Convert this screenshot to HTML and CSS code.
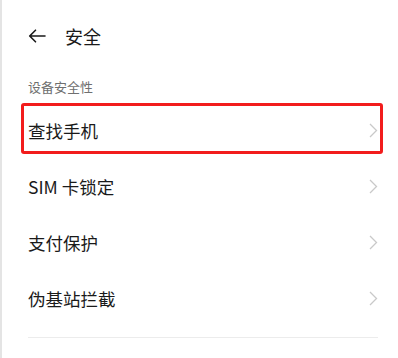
FILE: index.html
```html
<!DOCTYPE html>
<html lang="zh-CN">
<head>
    <meta charset="UTF-8">
    <meta name="viewport" content="width=device-width, initial-scale=1.0">
    <title>安全</title>
    <link rel="stylesheet" href="styles.css">
</head>
<body>
    <div class="page">
        <div class="top-bar">
            <svg class="back" width="18" height="14" viewBox="0 0 18 14">
                <path d="M17 7H2 M7.5 1.2L1.7 7l5.8 5.8" fill="none" stroke="#1a1a1a" stroke-width="1.6" stroke-linecap="round" stroke-linejoin="round"/>
            </svg>
            <h1>安全</h1>
        </div>

        <div class="section-title">设备安全性</div>

        <div class="list">
            <div class="row marked">
                <span>查找手机</span>
                <svg class="chev" width="9" height="15" viewBox="0 0 9 15"><path d="M1 1l6.5 6.5L1 14" fill="none" stroke="#c9c9c9" stroke-width="1.3"/></svg>
            </div>
            <div class="row">
                <span>SIM 卡锁定</span>
                <svg class="chev" width="9" height="15" viewBox="0 0 9 15"><path d="M1 1l6.5 6.5L1 14" fill="none" stroke="#c9c9c9" stroke-width="1.3"/></svg>
            </div>
            <div class="row">
                <span>支付保护</span>
                <svg class="chev" width="9" height="15" viewBox="0 0 9 15"><path d="M1 1l6.5 6.5L1 14" fill="none" stroke="#c9c9c9" stroke-width="1.3"/></svg>
            </div>
            <div class="row">
                <span>伪基站拦截</span>
                <svg class="chev" width="9" height="15" viewBox="0 0 9 15"><path d="M1 1l6.5 6.5L1 14" fill="none" stroke="#c9c9c9" stroke-width="1.3"/></svg>
            </div>
        </div>

        <div class="divider"></div>
    </div>
</body>
</html>
```

FILE: styles.css
```css
body {
    margin: 0;
    background: #ffffff;
    font-family: "Noto Sans CJK SC", "Noto Sans", sans-serif;
    color: #1a1a1a;
}

.page {
    height: 358px;
    box-sizing: border-box;
    border-left: 2px solid #e4e4e4;
    padding: 24px 20px 0 26px;
}

.top-bar {
    display: flex;
    align-items: center;
    height: 24px;
}

.back {
    display: block;
    margin-left: 0;
}

.top-bar h1 {
    margin: 0 0 0 19px;
    font-size: 18px;
    font-weight: normal;
    line-height: 24px;
}

.section-title {
    margin-top: 30px;
    font-size: 13px;
    line-height: 18px;
    color: #6f6f6f;
}

.list {
    margin-top: 6px;
}

.row {
    position: relative;
    display: flex;
    align-items: center;
    justify-content: space-between;
    height: 56px;
    font-size: 17.5px;
}

.row.marked::after {
    content: "";
    position: absolute;
    left: -7px;
    right: -5px;
    top: 1px;
    bottom: 4px;
    border: 3px solid #f21c1c;
    border-radius: 3px;
}

.chev {
    display: block;
}

.divider {
    margin-top: 11px;
    height: 1px;
    background: #ececec;
}
```
